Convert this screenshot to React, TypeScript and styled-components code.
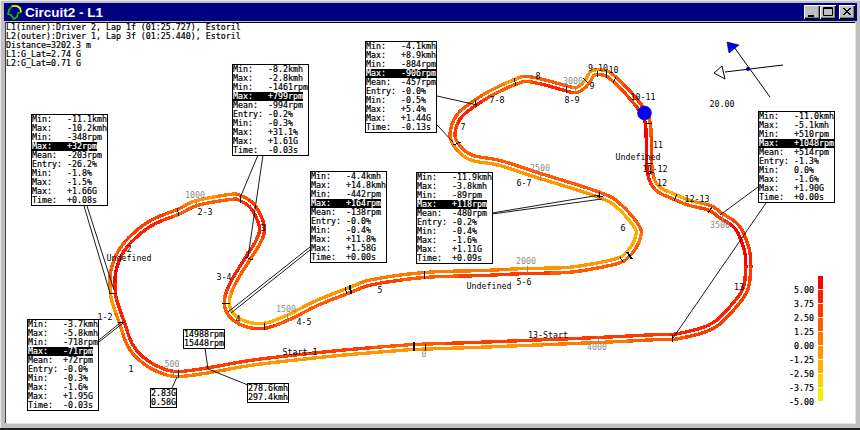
import React from 'react';
import styled, { createGlobalStyle } from 'styled-components';

// client area origin, all map coordinates below are window coordinates
const ORIGIN_X = 6;
const ORIGIN_Y = 23;

const PALETTE = ['#ff0000', '#ff2000', '#ff3c00', '#ff5a00', '#ff7a00', '#ff9500', '#ffae00', '#ffd000', '#f6ee00'];

// x, y, colour of right strand, colour of left strand (seen in driving direction)
const TRACK: number[][] = [
  [415, 347, 3, 5], [400, 348, 3, 5], [350, 352, 2, 5], [300, 357, 2, 5], [250, 363, 2, 5], [210, 370, 2, 4],
  [178, 374, 2, 4], [160, 370, 2, 3], [143, 360, 1, 3], [130, 345, 1, 3], [122, 323, 1, 4], [115, 303, 1, 5],
  [113, 293, 1, 5], [113, 273, 0, 3], [120, 253, 1, 3], [133, 237, 1, 2], [153, 222, 1, 2], [178, 212, 3, 3],
  [197, 203, 3, 5], [230, 197, 3, 4], [240, 198, 2, 3], [253, 207, 1, 2], [262, 227, 1, 1], [258, 242, 2, 3],
  [248, 258, 1, 3], [233, 283, 1, 3], [227, 300, 3, 6], [230, 313, 3, 6], [243, 323, 3, 6], [263, 326, 2, 6],
  [287, 318, 3, 6], [317, 303, 3, 5], [350, 290, 3, 5], [373, 282, 2, 4], [424, 275, 3, 4], [483, 273, 2, 4],
  [527, 271, 2, 5], [567, 270, 3, 5], [600, 265, 3, 5], [620, 260, 3, 5], [627, 255, 3, 6], [633, 248, 3, 6],
  [638, 237, 4, 6], [637, 227, 3, 6], [620, 207, 3, 6], [600, 195, 3, 5], [537, 175, 3, 5], [500, 163, 3, 5],
  [470, 157, 3, 5], [455, 143, 3, 4], [453, 130, 2, 3], [460, 115, 1, 3], [475, 103, 1, 3], [493, 92, 3, 4],
  [515, 82, 3, 5], [527, 79, 3, 3], [547, 83, 1, 3], [565, 88, 1, 3], [577, 90, 3, 4], [587, 82, 3, 5],
  [593, 73, 4, 5], [605, 73, 3, 5], [613, 78, 3, 3], [630, 95, 2, 2], [644, 113, 1, 2], [648, 125, 0, 3],
  [649, 147, 0, 2], [650, 172, 0, 3], [657, 188, 3, 5], [675, 197, 3, 6], [690, 203, 3, 5], [710, 208, 2, 3],
  [720, 215, 2, 3], [737, 227, 0, 2], [746, 247, 0, 2], [748, 260, 0, 1], [748, 273, 1, 2], [745, 290, 1, 2],
  [733, 307, 1, 2], [717, 323, 1, 2], [700, 331, 1, 2], [673, 337, 1, 3], [660, 337, 2, 3], [598, 340, 2, 4],
  [500, 344, 2, 5],
];

const STRAND_OFFSET = 2.5;

// smooth the closed track and cut each strand into runs of one colour
const buildStrand = (side: number, colourIndex: number) => {
  const runs: { colour: number; points: string[] }[] = [];
  const n = TRACK.length;
  for (let i = 0; i < n; i++) {
    const p0 = TRACK[(i - 1 + n) % n];
    const p1 = TRACK[i];
    const p2 = TRACK[(i + 1) % n];
    const p3 = TRACK[(i + 2) % n];
    const steps = 5;
    for (let s = 0; s <= steps; s++) {
      const t = s / steps;
      const x = 0.5 * (2 * p1[0] + (p2[0] - p0[0]) * t + (2 * p0[0] - 5 * p1[0] + 4 * p2[0] - p3[0]) * t * t + (3 * p1[0] - p0[0] - 3 * p2[0] + p3[0]) * t * t * t);
      const y = 0.5 * (2 * p1[1] + (p2[1] - p0[1]) * t + (2 * p0[1] - 5 * p1[1] + 4 * p2[1] - p3[1]) * t * t + (3 * p1[1] - p0[1] - 3 * p2[1] + p3[1]) * t * t * t);
      const dx = 0.5 * (p2[0] - p0[0] + 2 * (2 * p0[0] - 5 * p1[0] + 4 * p2[0] - p3[0]) * t + 3 * (3 * p1[0] - p0[0] - 3 * p2[0] + p3[0]) * t * t);
      const dy = 0.5 * (p2[1] - p0[1] + 2 * (2 * p0[1] - 5 * p1[1] + 4 * p2[1] - p3[1]) * t + 3 * (3 * p1[1] - p0[1] - 3 * p2[1] + p3[1]) * t * t);
      const len = Math.hypot(dx, dy) || 1;
      const px = x + (side * STRAND_OFFSET * -dy) / len;
      const py = y + (side * STRAND_OFFSET * dx) / len;
      const colour = Math.round(p1[colourIndex] + (p2[colourIndex] - p1[colourIndex]) * t);
      const point = `${px.toFixed(1)},${py.toFixed(1)}`;
      const last = runs[runs.length - 1];
      if (last && last.colour === colour) {
        last.points.push(point);
      } else {
        if (last) last.points.push(point);
        runs.push({ colour, points: [point] });
      }
    }
  }
  return runs;
};

const TICKS: { d: number[]; thick?: boolean }[] = [
  { d: [414, 342, 414, 351], thick: true }, { d: [425, 344, 425, 351] }, { d: [672, 335, 672, 342] },
  { d: [178, 370, 178, 378] }, { d: [118, 323, 125, 322] }, { d: [109, 293, 117, 293] },
  { d: [177, 208, 179, 216] }, { d: [240, 195, 240, 203] }, { d: [245, 257, 253, 260] },
  { d: [222, 303, 230, 303] }, { d: [264, 323, 264, 330] }, { d: [345, 287, 347, 294] },
  { d: [350, 285, 351, 294], thick: true }, { d: [424, 271, 424, 279] }, { d: [597, 196, 603, 196] },
  { d: [599, 192, 599, 198] }, { d: [620, 257, 623, 262] }, { d: [627, 252, 632, 259], thick: true },
  { d: [475, 100, 477, 107] }, { d: [514, 78, 516, 86] }, { d: [566, 86, 566, 93] },
  { d: [583, 78, 588, 83] }, { d: [597, 71, 597, 77] }, { d: [606, 71, 607, 78] },
  { d: [616, 77, 613, 83] }, { d: [453, 145, 461, 142] }, { d: [645, 124, 652, 123] },
  { d: [646, 163, 653, 163] }, { d: [647, 174, 654, 172] }, { d: [674, 201, 677, 194] },
  { d: [708, 213, 712, 207] },
];

const LEADERS: number[][] = [
  [84, 206, 110, 293], [87, 206, 114, 290], [258, 155, 240, 198], [263, 155, 248, 257],
  [310, 247, 228, 312], [310, 250, 231, 313], [492, 213, 600, 195], [492, 214, 602, 199],
  [437, 96, 477, 105], [437, 125, 453, 142], [758, 187, 720, 215], [766, 203, 673, 338],
  [99, 340, 120, 323], [99, 342, 123, 323], [172, 388, 177, 377], [205, 348, 208, 369], [208, 369, 248, 385],
];

const DISTANCES: { text: string; x: number; y: number; tick?: number[] }[] = [
  { text: '0', x: 424, y: 354 },
  { text: '500', x: 172, y: 364, tick: [173, 370, 173, 377] },
  { text: '1000', x: 195, y: 195, tick: [196, 200, 196, 207] },
  { text: '1500', x: 286, y: 309, tick: [287, 314, 287, 321] },
  { text: '2000', x: 526, y: 261, tick: [527, 266, 527, 273] },
  { text: '2500', x: 540, y: 168, tick: [540, 173, 540, 180] },
  { text: '3000', x: 573, y: 81, tick: [575, 87, 575, 93] },
  { text: '3500', x: 720, y: 225, tick: [722, 215, 722, 222] },
  { text: '4000', x: 597, y: 347, tick: [598, 336, 598, 343] },
];

const LABELS: { text: string; x: number; y: number }[] = [
  { text: '1', x: 131, y: 369 }, { text: '1-2', x: 105, y: 317 }, { text: '2', x: 129, y: 249 },
  { text: 'Undefined', x: 129, y: 258 }, { text: '2-3', x: 205, y: 212 }, { text: '3', x: 263, y: 228 },
  { text: '3-4', x: 224, y: 277 }, { text: '4', x: 238, y: 319 }, { text: '4-5', x: 304, y: 322 },
  { text: '5', x: 380, y: 290 }, { text: 'Undefined', x: 489, y: 286 }, { text: '5-6', x: 524, y: 282 },
  { text: '6', x: 623, y: 228 }, { text: '6-7', x: 524, y: 183 }, { text: '7', x: 463, y: 127 },
  { text: '7-8', x: 497, y: 100 }, { text: '8', x: 538, y: 76 }, { text: '8-9', x: 572, y: 100 },
  { text: '9', x: 592, y: 86 }, { text: '9-10', x: 598, y: 68 }, { text: '10', x: 613.5, y: 70 },
  { text: '10-11', x: 643, y: 97 }, { text: '11', x: 658, y: 145 }, { text: 'Undefined', x: 638, y: 157 },
  { text: '11-12', x: 655, y: 169 }, { text: '12', x: 662, y: 183 }, { text: '12-13', x: 697, y: 199 },
  { text: '13', x: 739, y: 287 }, { text: '13-Start', x: 548, y: 335 }, { text: 'Start-1', x: 300, y: 352 },
  { text: '20.00', x: 722, y: 104 },
];

const HEADER = [
  'L1(inner):Driver 2, Lap 1f (01:25.727), Estoril',
  'L2(outer):Driver 1, Lap 3f (01:25.440), Estoril',
  'Distance=3202.3 m',
  'L1:G_Lat=2.74 G',
  'L2:G_Lat=0.71 G',
];

const stats = (v: string[]) => [
  `Min:   ${v[0]}kmh`,
  `Max:   ${v[1]}kmh`,
  `Min:   ${v[2]}rpm`,
  `Max:   ${v[3]}rpm`,
  `Mean:  ${v[4]}rpm`,
  `Entry: ${v[5]}%`,
  `Min:   ${v[6]}%`,
  `Max:   ${v[7]}%`,
  `Max:   ${v[8]}G`,
  `Time:  ${v[9]}s`,
];

const STAT_BOXES = [
  { x: 31, y: 114, rows: stats(['-11.1', '-10.2', '-348', '+32', '-203', '-26.2', '-1.8', '-1.5', '+1.66', '+0.08']) },
  { x: 232, y: 64, rows: stats(['-8.2', '-2.8', '-1461', '+799', '-994', '-0.2', '-0.3', '+31.1', '+1.61', '-0.03']) },
  { x: 310, y: 171, rows: stats(['-4.4', '+14.8', '-442', '+164', '-138', '-0.0', '-0.4', '+11.8', '+1.58', '+0.00']) },
  { x: 416, y: 172, rows: stats(['-11.9', '-3.8', '-89', '+118', '-480', '-0.2', '-0.4', '-1.6', '+1.11', '+0.09']) },
  { x: 365, y: 41, rows: stats(['-4.1', '+8.9', '-884', '-906', '-457', '-0.0', '-0.5', '+5.4', '+1.44', '-0.13']) },
  { x: 758, y: 111, rows: stats(['-11.0', '-5.1', '+510', '+1048', '+514', '-1.3', '0.0', '-1.6', '+1.90', '+0.00']) },
  { x: 27, y: 319, rows: stats(['-3.7', '-5.8', '-718', '-71', '+72', '-0.0', '-0.3', '-1.6', '+1.95', '-0.03']) },
];

const SMALL_BOXES = [
  { x: 183, y: 329, rows: ['14988rpm', '15448rpm'] },
  { x: 247, y: 383, rows: ['278.6kmh', '297.4kmh'] },
  { x: 150, y: 388, rows: ['2.83G', '0.58G'] },
];

const LEGEND = ['5.00', '3.75', '2.50', '1.25', '0.00', '-1.25', '-2.50', '-3.75', '-5.00'];

const GlobalStyle = createGlobalStyle`
  html, body {
    margin: 0;
    padding: 0;
    background: #000;
  }
`;

const Window = styled.div`
  width: 860px;
  height: 430px;
  box-sizing: border-box;
  background: #c0c0c0;
  padding: 3px 3px 5px 3px;
  display: flex;
  flex-direction: column;
  border-bottom: 2px solid #202020;
  box-shadow: inset 1px 1px 0 #e8e8e8;
  overflow: hidden;
`;

const TitleBar = styled.div`
  height: 18px;
  flex: none;
  margin-left: 1px;
  background: #000080;
  display: flex;
  align-items: center;
  padding: 0 2px;
  gap: 2px;
`;

const TitleText = styled.span`
  color: #fff;
  font: 700 13.5px "Liberation Sans", Arial, sans-serif;
  flex: 1;
`;

const WindowButton = styled.button`
  width: 16px;
  height: 14px;
  margin-left: ${p => p.$gap || 0}px;
  padding: 0;
  background: #c0c0c0;
  border: none;
  box-shadow: inset 1px 1px 0 #fff, inset -1px -1px 0 #000, inset -2px -2px 0 #808080;
  display: flex;
  align-items: center;
  justify-content: center;
`;

const ButtonGroup = styled.div`
  display: flex;
`;

const Client = styled.div`
  position: relative;
  flex: 1;
  margin: 1px 2px 0 3px;
  background: #fff;
  border-top: 1px solid #000;
  box-shadow: -1px 0 0 #404040, 1px 1px 0 #e4e4e4;
  font: 8.3px/9px "DejaVu Sans Mono", "Liberation Mono", monospace;
  -webkit-text-stroke: 0.2px currentColor;
  color: #000;
`;

const MapCanvas = styled.svg`
  position: absolute;
  left: 0;
  top: 0;
  font: 8.3px "DejaVu Sans Mono", "Liberation Mono", monospace;
`;

const Header = styled.div`
  position: relative;
  white-space: pre;
`;

const TrackLabel = styled.text`
  fill: #000;
  text-anchor: middle;
  dominant-baseline: central;
`;

const DistanceLabel = styled(TrackLabel)`
  fill: #8c8c8c;
  -webkit-text-stroke: 0;
`;

const Callout = styled.div`
  position: absolute;
  left: ${p => p.$x - ORIGIN_X}px;
  top: ${p => p.$y - ORIGIN_Y}px;
  background: #fff;
  border: 1px solid #000;
  white-space: pre;
`;

const StatRow = styled.div`
  height: 9px;
`;

const Highlight = styled.span`
  display: inline-block;
  height: 9px;
  background: #000;
  color: #fff;
`;

const Legend = styled.div`
  position: absolute;
  left: ${789 - ORIGIN_X}px;
  top: ${276 - ORIGIN_Y}px;
  display: grid;
  grid-template-columns: 25px 5px;
  column-gap: 4px;
`;

const LegendValue = styled.div`
  height: 14px;
  padding-top: 10px;
  box-sizing: border-box;
  line-height: 9px;
  text-align: right;
`;

const LegendSwatch = styled.div`
  height: 13px;
  margin-bottom: 1px;
  background: ${p => p.$colour};
`;

const App = () => {
  const inner = buildStrand(1, 2);
  const outer = buildStrand(-1, 3);

  return (
    <>
      <GlobalStyle />
      <Window>
        <TitleBar>
          <svg width="17" height="16" viewBox="0 0 17 16">
            <path d="M3 6 L6 2 L11 2 L14 4 L15 8 L12 9 L11 13 L8 15 L5 11 L2 10 Z" fill="#000080" stroke="#00d000" strokeWidth="1.6" />
            <path d="M6 2 L11 2 L14 4 L15 8" fill="none" stroke="#ffff00" strokeWidth="1.6" />
          </svg>
          <TitleText>Circuit2 - L1</TitleText>
          <ButtonGroup>
            <WindowButton>
              <svg width="16" height="14"><path d="M4 10h6v2H4z" fill="#000" /></svg>
            </WindowButton>
            <WindowButton>
              <svg width="16" height="14"><path d="M3.5 2.5h9v8h-9zM3.5 3.5h9" fill="none" stroke="#000" /></svg>
            </WindowButton>
            <WindowButton $gap={3}>
              <svg width="16" height="14"><path d="M4 3l7 7M5 3l7 7M11 3l-7 7M12 3l-7 7" stroke="#000" /></svg>
            </WindowButton>
          </ButtonGroup>
        </TitleBar>
        <Client>
          <MapCanvas width="850" height="400" viewBox={`${ORIGIN_X} ${ORIGIN_Y} 850 400`}>
            <g fill="none" strokeWidth="3.4" strokeLinejoin="round" strokeLinecap="round" shapeRendering="crispEdges">
              {[...inner, ...outer].map((run, i) => (
                <polyline key={i} points={run.points.join(' ')} stroke={PALETTE[run.colour]} />
              ))}
            </g>
            <g stroke="#000" strokeWidth="1" shapeRendering="crispEdges">
              {TICKS.map((t, i) => (
                <line key={i} x1={t.d[0]} y1={t.d[1]} x2={t.d[2]} y2={t.d[3]} strokeWidth={t.thick ? 2 : 1} />
              ))}
            </g>
            <g stroke="#000" strokeWidth="0.9">
              {LEADERS.map((l, i) => (
                <line key={i} x1={l[0]} y1={l[1]} x2={l[2]} y2={l[3]} />
              ))}
            </g>
            <g stroke="#8c8c8c" shapeRendering="crispEdges">
              {DISTANCES.filter(d => d.tick).map(d => (
                <line key={d.text} x1={d.tick![0]} y1={d.tick![1]} x2={d.tick![2]} y2={d.tick![3]} />
              ))}
            </g>
            {DISTANCES.map(d => (
              <DistanceLabel key={d.text} x={d.x} y={d.y}>{d.text}</DistanceLabel>
            ))}
            {LABELS.map(l => (
              <TrackLabel key={`${l.text}-${l.x}`} x={l.x} y={l.y}>{l.text}</TrackLabel>
            ))}
            <circle cx="644.5" cy="113" r="7" fill="#0000ff" stroke="#000060" strokeWidth="0.5" />
            {/* wind / heading compass */}
            <path d="M734 47L770 97M725 72L783 65" stroke="#000" fill="none" />
            <path d="M727 42L739 45L729 53Z" fill="#0000ff" stroke="#000" strokeWidth="0.6" />
            <path d="M714 73L722 66L725 79Z" fill="#fff" stroke="#000" />
            <circle cx="748" cy="69" r="2" fill="#0000a0" />
          </MapCanvas>

          <Header>
            {HEADER.map(line => (
              <div key={line}>{line}</div>
            ))}
          </Header>

          {STAT_BOXES.map(box => (
            <Callout key={box.x} $x={box.x} $y={box.y}>
              {box.rows.map((row, i) => (
                <StatRow key={i}>{i === 3 ? <Highlight>{row}</Highlight> : row}</StatRow>
              ))}
            </Callout>
          ))}

          {SMALL_BOXES.map(box => (
            <Callout key={box.x} $x={box.x} $y={box.y}>
              {box.rows.map(row => (
                <StatRow key={row}>{row}</StatRow>
              ))}
            </Callout>
          ))}

          <Legend>
            {LEGEND.map((value, i) => (
              <React.Fragment key={value}>
                <LegendValue>{value}</LegendValue>
                <LegendSwatch $colour={PALETTE[i]} />
              </React.Fragment>
            ))}
          </Legend>
        </Client>
      </Window>
    </>
  );
};

export default App;
